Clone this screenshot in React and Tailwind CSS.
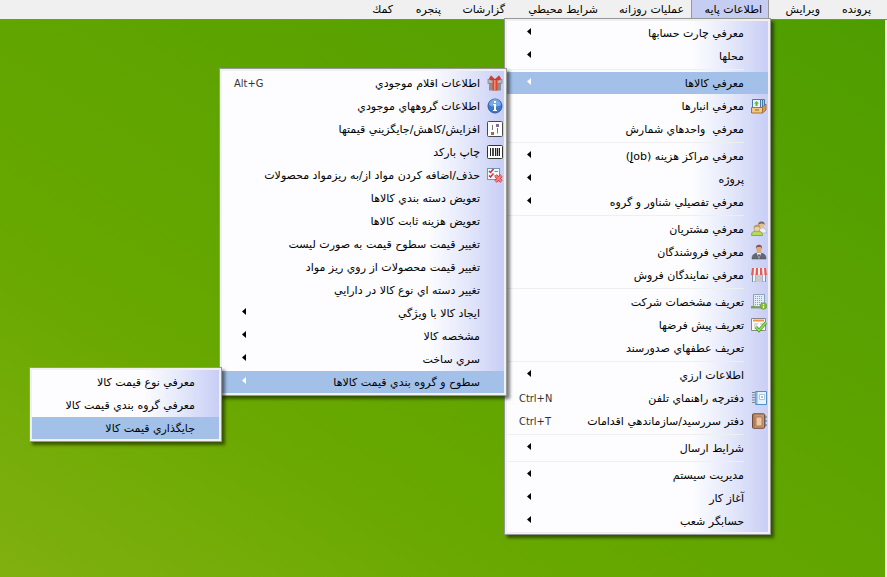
// src/App.jsx
import React from "react";
import clsx from "clsx";

const GiftIcon = () => (
  <svg viewBox="0 0 16 16" className="size-4">
    <rect x="2" y="8" width="12" height="7.500" fill="#8f8f93" />
    <rect x="1" y="4.500" width="14" height="4" fill="#b9b3b3" stroke="#77757a" strokeWidth=".6" />
    <rect x="5.500" y="4.500" width="5" height="11" fill="#e2462f" />
    <rect x="7" y="4.500" width="1.500" height="11" fill="#f58a72" />
    <path d="M8 4.500 4 .8 2.300 3.800l2 1.200zM8 4.500 12 .8l1.700 3-2 1.200z" fill="#d93a2a" stroke="#b13024" strokeWidth=".6" />
  </svg>
);

const InfoIcon = () => (
  <svg viewBox="0 0 16 16" className="size-4">
    <circle cx="8" cy="8" r="7" fill="#3f78cc" stroke="#2c5aa8" />
    <path d="M2 7a6 6 0 0 1 12 0c-3 2-9 2-12 0z" fill="#78a8e6" />
    <rect x="7" y="3" width="2" height="2" fill="#fff" />
    <path d="M6 6h3v6h1v1H6v-1h1V7H6z" fill="#fff" />
  </svg>
);

const SlidersIcon = () => (
  <svg viewBox="0 0 16 16" className="size-4">
    <rect x=".5" y=".5" width="15" height="15" rx="1" fill="#fff" stroke="#4a4a4a" />
    <path d="M5.500 4v5M10.500 7v5.500" stroke="#777" />
    <rect x="4" y="11" width="3" height="3" fill="#b0664a" />
    <rect x="9" y="3" width="3" height="3" fill="#7c7094" />
  </svg>
);

const BarcodeIcon = () => (
  <svg viewBox="0 0 16 16" className="size-4">
    <rect x=".5" y="1.500" width="15" height="13" rx="1" fill="#fff" stroke="#333" />
    <path d="M3.500 4v8M8.500 4v8M12.500 4v8" stroke="#222" />
    <path d="M6 4v8M10.500 4v8" stroke="#222" strokeWidth="1.600" />
  </svg>
);

const ChecklistIcon = () => (
  <svg viewBox="0 0 16 16" className="size-4">
    <rect x=".5" y="1.500" width="12" height="11" fill="#f3f8fd" stroke="#7396bf" />
    <path d="M7.500 4.500H11M7.500 8.500H11" stroke="#6c8fb8" />
    <path d="m2 4 1.500 1.500L6.500 2M2 8.500 3.500 10l3-3.500" fill="none" stroke="#d42a2a" strokeWidth="1.500" />
    <path d="m8.500 8.500 6 6m0-6-6 6" stroke="#c23b3b" strokeWidth="3.400" />
    <path d="m8.500 8.500 6 6m0-6-6 6" stroke="#f08080" strokeWidth="2" />
  </svg>
);

const ArchiveIcon = () => (
  <svg viewBox="0 0 16 16" className="size-4">
    <path d="M5.500 1.500h8v10h-8z" fill="#a8c8e8" stroke="#4b77a8" />
    <path d="M3.500 1.500h8v8h-8z" fill="#c2daf0" stroke="#4b77a8" />
    <path d="M1.500 1.500h8v8h-8z" fill="#eaf4fb" stroke="#4b77a8" />
    <path d="M5.500 3 8 5.500H6.500V8h-2V5.500H3z" fill="#62b13c" />
    <path d="m11.500 9 3.500-3v6l-3.500 3z" fill="#d89a4a" stroke="#95652a" strokeWidth=".8" />
    <path d="M.5 9.500h11V15H.5z" fill="#f4c681" stroke="#a87433" />
    <path d="M4 11.500h4v1H4z" fill="#8d602a" />
  </svg>
);

const CustomersIcon = () => (
  <svg viewBox="0 0 16 16" className="size-4">
    <path d="M8 12c0-4 1-5 3-5s4.500 1 4.500 5z" fill="#edf0f4" stroke="#a9afb8" strokeWidth=".7" />
    <circle cx="10.500" cy="4" r="3" fill="#e8bf92" />
    <path d="M7.300 4C7 1.500 8.500.5 10.500.5s3.500 1.200 3 3.500c-1-2-4-2-6.200 0z" fill="#77644f" />
    <path d="M.5 14.500c0-3.500 1.500-4.500 5-4.500 4 0 6 1 6 4.500z" fill="#b5d958" stroke="#74a02c" strokeWidth=".8" />
    <circle cx="6" cy="7.500" r="3" fill="#f2cfa5" stroke="#ad8154" strokeWidth=".5" />
    <path d="M2.800 7.500C2.500 5 4 3.800 6 3.800S9.500 5 9.200 7c-1.500-1.500-4-1.800-6.400.5z" fill="#b99a56" />
  </svg>
);

const SellerIcon = () => (
  <svg viewBox="0 0 16 16" className="size-4">
    <path d="M1 15c0-4 1.500-5 5-6h4c3.500 1 5 2 5 6z" fill="#636971" stroke="#454b53" strokeWidth=".5" />
    <path d="M5.800 9 8 15l2.200-6z" fill="#f4f5f7" />
    <path d="m8 10-.9 1L8 14.500l.9-3.500z" fill="#343a42" />
    <path d="M5.500 2.500h5v4L9.500 9h-3l-1-2.500z" fill="#dfaa80" />
    <path d="M5 5c-.5-3 .8-4.300 3-4.300S11.500 2 11 5l-1-2H6z" fill="#7f5943" />
  </svg>
);

const ShopIcon = () => (
  <svg viewBox="0 0 16 16" className="size-4">
    <path d="M1.500 7v8M14.500 7v8M4 8v7M12 8v7" stroke="#718db0" />
    <path d="M5 8h6v7H5z" fill="#ccc9c5" />
    <path d="M2 8h2v6H2zM12 8h2v6h-2z" fill="#eff5fb" />
    <path d="M1 1h14l1 6.500H0z" fill="#fdf0ef" />
    <path d="M1 1h2l-.5 7H0zM5 1h2v7H4.500zM9 1h2l.5 7H9zM13 1h2l1 7h-2.500z" fill="#e35d5d" />
  </svg>
);

const CompanyIcon = () => (
  <svg viewBox="0 0 16 16" className="size-4">
    <path d="M2.500.5h11v12h-11z" fill="#e3edf7" stroke="#8aa3bf" />
    <path d="M4.500 2v9M6.500 2v9M8.500 2v9M10.500 2v9" stroke="#84a4c8" strokeDasharray="1 1" />
    <path d="M0 13.500h12" stroke="#8a9b78" strokeWidth="2" />
    <path d="M0 12h4v2H0z" fill="#72a948" />
    <circle cx="12.500" cy="12" r="3.300" fill="#83bd38" stroke="#5d9425" strokeWidth=".6" />
    <path d="M12.500 10v1M12.500 11.800v2.400" stroke="#fff" strokeWidth="1.200" />
  </svg>
);

const DefaultsIcon = () => (
  <svg viewBox="0 0 16 16" className="size-4">
    <path d="M.5 1.500h14v12H.5z" fill="#fbfbfb" stroke="#8a8785" />
    <path d="M2 3.500h11" stroke="#ea9548" strokeWidth="2" />
    <path d="M3 7h4M3 9h3M3 11h2M9 7h4" stroke="#b9bdc2" />
    <path d="m5 10 3 3.500 7-8" fill="none" stroke="#42912a" strokeWidth="3" />
    <path d="m5 10 3 3.500 7-8" fill="none" stroke="#96e34f" strokeWidth="1.700" />
  </svg>
);

const PhonebookIcon = () => (
  <svg viewBox="0 0 16 16" className="size-4">
    <path d="M4.500 1.500h11v13h-11z" fill="#e4f2fc" stroke="#4a91c9" />
    <path d="M5.500 2v12" stroke="#79b6e2" strokeWidth="2" />
    <path d="M8.500 4.500h5v5h-5z" fill="#fff" stroke="#a5cae5" />
    <path d="M10 7h2" stroke="#697f94" />
    <path d="M1 2.500h3M1 5h3M1 7.500h3M1 10h3M1 12.500h3" stroke="#76838e" strokeWidth="1.200" />
  </svg>
);

const DiaryIcon = () => (
  <svg viewBox="0 0 16 16" className="size-4">
    <rect x="1.500" y=".8" width="12" height="14.500" rx="1" fill="#c99871" stroke="#73492d" />
    <path d="M3 1.500v13" stroke="#8f6244" />
    <path d="M5 4h6v9H5z" fill="#edc7a4" stroke="#a1704a" strokeWidth=".8" />
    <path d="M13 3h2v2h-2M13 7h2v2h-2M13 11h2v2h-2" fill="none" stroke="#5d6d7d" />
  </svg>
);

const priceLevelItems = [
  { label: "معرفي نوع قيمت كالا" },
  { label: "معرفي گروه بندي قيمت كالا" },
  { label: "جايگذاري قيمت كالا", active: true },
];

const goodsItems = [
  { label: "اطلاعات اقلام موجودي", icon: GiftIcon, shortcut: "Alt+G" },
  { label: "اطلاعات گروههاي موجودي", icon: InfoIcon },
  { label: "افزايش/كاهش/جايگزيني قيمتها", icon: SlidersIcon },
  { label: "چاپ باركد", icon: BarcodeIcon },
  { label: "حذف/اضافه كردن مواد از/به ريزمواد محصولات", icon: ChecklistIcon },
  { label: "تعويض دسته بندي كالاها" },
  { label: "تعويض هزينه ثابت كالاها" },
  { label: "تغيير قيمت سطوح قيمت به صورت ليست" },
  { label: "تغيير قيمت محصولات از روي ريز مواد" },
  { label: "تغيير دسته اي نوع كالا در دارايي" },
  { label: "ايجاد كالا با ويژگي", arrow: true },
  { label: "مشخصه كالا", arrow: true },
  { label: "سري ساخت", arrow: true },
  {
    label: "سطوح و گروه بندي قيمت كالاها",
    arrow: true,
    active: true,
    children: priceLevelItems,
    childWidth: "w-[193px]",
  },
];

const baseInfoItems = [
  { label: "معرفي چارت حسابها", arrow: true },
  { label: "محلها", arrow: true },
  { separator: true },
  {
    label: "معرفي كالاها",
    arrow: true,
    active: true,
    children: goodsItems,
    childWidth: "w-72",
  },
  { label: "معرفي انبارها", icon: ArchiveIcon },
  { label: "معرفي \u00a0واحدهاي شمارش" },
  { separator: true },
  {
    label: (
      <>
        معرفي مراكز هزينه (
        <u className="underline-offset-2 [text-decoration-skip-ink:none]">J</u>
        ob)
      </>
    ),
    arrow: true,
  },
  { label: "پروژه", arrow: true },
  { label: "معرفي تفصيلي شناور و گروه", arrow: true },
  { separator: true },
  { label: "معرفي مشتريان", icon: CustomersIcon },
  { label: "معرفي فروشندگان", icon: SellerIcon },
  { label: "معرفي نمايندگان فروش", icon: ShopIcon },
  { separator: true },
  { label: "تعريف مشخصات شركت", icon: CompanyIcon },
  { label: "تعريف پيش فرضها", icon: DefaultsIcon },
  { label: "تعريف عطفهاي صدورسند" },
  { separator: true },
  { label: "اطلاعات ارزي", arrow: true },
  { label: "دفترچه راهنماي تلفن", icon: PhonebookIcon, shortcut: "Ctrl+N" },
  { label: "دفتر سررسيد/سازماندهي اقدامات", icon: DiaryIcon, shortcut: "Ctrl+T" },
  { separator: true },
  { label: "شرايط ارسال", arrow: true },
  { separator: true },
  { label: "مديريت سيستم", arrow: true },
  { label: "آغاز كار", arrow: true },
  { label: "حسابگر شعب", arrow: true },
];

const menuBar = [
  { label: "پرونده", width: "w-[51px]" },
  { label: "ويرايش", width: "w-[58px]" },
  { label: "اطلاعات پايه", width: "w-[78px]", children: baseInfoItems },
  { label: "عمليات روزانه", width: "w-[86px]" },
  { label: "شرايط محيطي", width: "w-[93px]" },
  { label: "گزارشات", width: "w-16" },
  { label: "پنجره", width: "w-12" },
  { label: "كمك", width: "w-[45px]" },
];

function MenuItem({ item }) {
  const Icon = item.icon;
  return (
    <li className="relative">
      <button
        type="button"
        className={clsx(
          "flex h-[22px] w-full items-center whitespace-nowrap text-start",
          item.active && "bg-[#a2c0e8]"
        )}
      >
        <span className="flex w-6 shrink-0 justify-center pe-1.5">
          {Icon && <Icon />}
        </span>
        <span className="grow pt-0.5">{item.label}</span>
        {item.shortcut && (
          <span
            dir="ltr"
            className="ml-3 w-10 shrink-0 pt-0.5 text-left font-['DejaVu_Sans_Condensed',sans-serif] text-[#333]"
          >
            {item.shortcut}
          </span>
        )}
        {item.arrow && (
          <svg
            viewBox="0 0 4 7"
            className={clsx(
              "mb-1 me-5 h-[7px] w-1 shrink-0",
              item.active ? "fill-white" : "fill-black"
            )}
          >
            <path d="M4 0v7L0 3.500z" />
          </svg>
        )}
      </button>
      {item.children && (
        <Menu
          items={item.children}
          className={clsx("right-full -top-1", item.childWidth)}
        />
      )}
    </li>
  );
}

function Menu({ items, className }) {
  return (
    <div
      className={clsx(
        "absolute z-10 border border-[#979797] bg-[#f0f0f0] p-0.5 shadow-[3px_3px_3px_rgba(0,0,0,0.5)]",
        className
      )}
    >
      <ul className="flex flex-col gap-px bg-[#fdfdff] bg-linear-to-l from-[#c8cef5] via-[#e3e7fa] via-[36px] to-[#fdfdff] to-[76px] pt-px">
        {items.map((item, i) =>
          item.separator ? (
            <li key={i} role="separator" className="h-[3px] py-px ps-6">
              <div className="h-px bg-[#efefef]" />
            </li>
          ) : (
            <MenuItem key={i} item={item} />
          )
        )}
      </ul>
    </div>
  );
}

export default function App() {
  return (
    <div
      dir="rtl"
      className="flex min-h-screen flex-col overflow-hidden bg-[#f0f0f0] font-['DejaVu_Sans',sans-serif] text-[11px] leading-4 text-black"
    >
      <nav className="h-5 border-b border-[#808080] pe-2 ps-[9px]">
        <ul className="flex">
          {menuBar.map((menu) => (
            <li key={menu.label} className={clsx("relative shrink-0", menu.width)}>
              <button
                type="button"
                className={clsx(
                  "h-[18px] w-full whitespace-nowrap pt-0.5 text-start",
                  menu.children
                    ? "border-x border-[#979797] bg-[#c6cdf2] ps-1.5"
                    : "ps-[7px]"
                )}
              >
                {menu.label}
              </button>
              {menu.children && (
                <Menu
                  items={menu.children}
                  className="-right-0.5 top-[18px] w-[267px]"
                />
              )}
            </li>
          ))}
        </ul>
      </nav>
      <main className="ms-0.5 grow bg-linear-to-tr from-[#80b010] via-[#68a800] via-30% to-[#4e9d00]" />
    </div>
  );
}
